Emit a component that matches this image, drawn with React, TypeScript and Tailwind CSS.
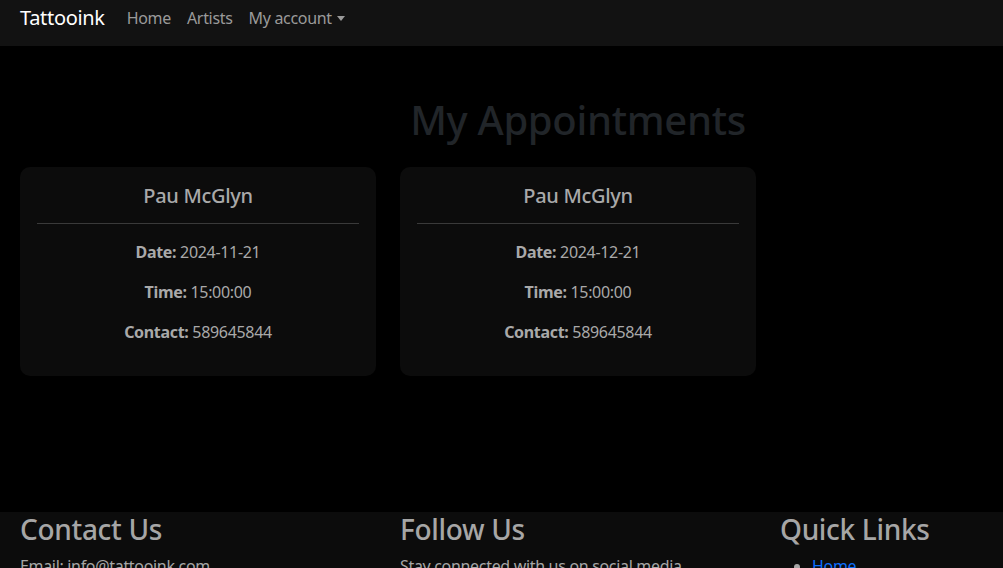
import React from "react";

const appts = [
  { name: "Pau McGlyn", date: "2024-11-21", time: "15:00:00", contact: "589645844" },
  { name: "Pau McGlyn", date: "2024-12-21", time: "15:00:00", contact: "589645844" },
];

export default function App() {
  return (
    <div
      className="w-full min-h-[568px] bg-black overflow-hidden tracking-[-0.02em]"
      style={{ fontFamily: '"Noto Sans", "Open Sans", sans-serif' }}
    >
      <nav className="h-[46px] bg-[#121212] flex items-start pt-[6px] px-5">
        <span className="text-white text-[20px] leading-[24px] mr-[22px]">Tattooink</span>
        <div className="flex items-center gap-4 text-[16px] leading-[24px] text-[#9a9a9a]">
          <span>Home</span>
          <span>Artists</span>
          <span className="flex items-center">
            My account
            <span className="ml-[5px] inline-block w-0 h-0 border-l-[4px] border-r-[4px] border-t-[5px] border-l-transparent border-r-transparent border-t-[#9a9a9a]" />
          </span>
        </div>
      </nav>

      <main className="px-5 pt-[50px] h-[466px]">
        <div className="w-[1116px]">
          <h1 className="mb-[23px] text-center text-[40px] leading-[48px] font-medium text-[#212529]">
            My Appointments
          </h1>
          <div className="flex gap-6">
            {appts.map((a, i) => (
              <div key={i} className="w-[356px] bg-[#0c0c0c] rounded-[10px] pt-[17px] px-[17px] pb-[16px] text-center text-[#a9a9a9]">
                <h5 className="text-[20px] leading-[24px] font-medium">{a.name}</h5>
                <hr className="mt-[15px] mb-[16px] border-t border-[#3a3a3a]" />
                <p className="text-[16px] leading-[24px] mb-4">
                  <strong>Date:</strong> {a.date}
                </p>
                <p className="text-[16px] leading-[24px] mb-4">
                  <strong>Time:</strong> {a.time}
                </p>
                <p className="text-[16px] leading-[24px] mb-4">
                  <strong>Contact:</strong> {a.contact}
                </p>
              </div>
            ))}
          </div>
        </div>
      </main>

      <footer className="bg-[#0c0c0c] px-5 h-[56px] overflow-hidden">
        <div className="w-[1116px] flex gap-6 text-[#a6a6a6]">
          <div className="w-[356px]">
            <h3 className="text-[28px] leading-[34px] font-medium mb-2">Contact Us</h3>
            <p className="text-[16px] leading-[24px]">Email: info@tattooink.com</p>
          </div>
          <div className="w-[356px]">
            <h3 className="text-[28px] leading-[34px] font-medium mb-2">Follow Us</h3>
            <p className="text-[16px] leading-[24px]">Stay connected with us on social media</p>
          </div>
          <div className="w-[356px]">
            <h3 className="text-[28px] leading-[34px] font-medium mb-2">Quick Links</h3>
            <ul className="list-disc pl-8 text-[16px] leading-[24px]">
              <li>
                <a className="text-[#0d6efd] underline">Home</a>
              </li>
            </ul>
          </div>
        </div>
      </footer>
    </div>
  );
}
